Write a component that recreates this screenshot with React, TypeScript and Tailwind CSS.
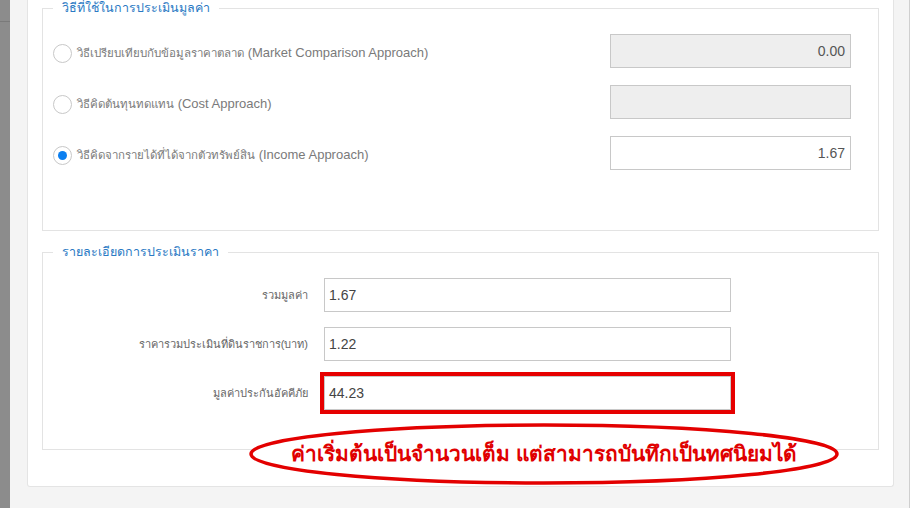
import React from "react";

const font = { fontFamily: '"Liberation Sans", Arial, sans-serif' };

function Radio({ checked }: { checked?: boolean }) {
  return (
    <span className="flex h-[19px] w-[19px] shrink-0 items-center justify-center rounded-full border border-[#c8c8c8] bg-white">
      {checked && <span className="h-[9px] w-[9px] rounded-full bg-[#0b7ff0]" />}
    </span>
  );
}

function MethodRow({
  thai,
  eng,
  value,
  checked,
  disabled,
}: {
  thai: string;
  eng: string;
  value: string;
  checked?: boolean;
  disabled?: boolean;
}) {
  return (
    <div className="flex h-[34px] items-center">
      <div className="flex flex-1 items-center gap-[5px] pl-[10px] pt-[4px]">
        <Radio checked={checked} />
        <span className="text-[13px] text-[#7a7a7a]">
          <span className="text-[11.5px]">{thai}</span> {eng}
        </span>
      </div>
      <div
        className={`mr-[27px] flex h-[34px] w-[241px] items-center justify-end border border-[#c8c8c8] pr-[5px] text-[14px] text-[#555] ${
          disabled ? "bg-[#eeeeee]" : "bg-white"
        }`}
      >
        {value}
      </div>
    </div>
  );
}

function DetailRow({ label, value, highlight }: { label: string; value: string; highlight?: boolean }) {
  return (
    <div className="flex h-[34px] items-center">
      <div className="w-[281px] pr-[16px] text-right text-[11px] text-[#666]">{label}</div>
      <div
        className={`flex h-[34px] w-[407px] items-center border border-[#c8c8c8] bg-white pl-[4px] text-[14px] text-[#444] ${
          highlight ? "outline-[4px] outline-solid outline-[#e60000]" : ""
        }`}
      >
        {value}
      </div>
    </div>
  );
}

export default function App() {
  return (
    <div className="flex h-[508px] w-[910px] overflow-hidden bg-[#f4f4f4]" style={font}>
      <div className="relative w-[10px] bg-[#8c8c8c]">
        <div className="absolute left-0 top-[21px] h-[1px] w-[10px] bg-[#7a7a7a]" />
      </div>
      <div className="pl-[17px] pr-[15px]">
        <div className="relative h-[487px] w-[867px] rounded-b-[3px] border-x border-b border-[#e4e4e4] bg-white px-[14px]">
          <fieldset className="h-[231px] border border-[#e3e3e3]">
            <legend className="ml-[10px] px-[9px] text-[12.5px] leading-[16px] text-[#2a7ac4]">
              วิธีที่ใช้ในการประเมินมูลค่า
            </legend>
            <div className="flex flex-col gap-[17px] pt-[18px]">
              <MethodRow
                thai="วิธีเปรียบเทียบกับข้อมูลราคาตลาด"
                eng="(Market Comparison Approach)"
                value="0.00"
                disabled
              />
              <MethodRow thai="วิธีคิดต้นทุนทดแทน" eng="(Cost Approach)" value="" disabled />
              <MethodRow
                thai="วิธีคิดจากรายได้ที่ได้จากตัวทรัพย์สิน"
                eng="(Income Approach)"
                value="1.67"
                checked
              />
            </div>
          </fieldset>
          <fieldset className="mt-[13px] h-[206px] border border-[#e3e3e3]">
            <legend className="ml-[10px] px-[9px] text-[12.5px] font-medium leading-[16px] text-[#2a7ac4]">
              รายละเอียดการประเมินราคา
            </legend>
            <div className="flex flex-col gap-[15px] pt-[18px]">
              <DetailRow label="รวมมูลค่า" value="1.67" />
              <DetailRow label="ราคารวมประเมินที่ดินราชการ(บาท)" value="1.22" />
              <DetailRow label="มูลค่าประกันอัคคีภัย" value="44.23" highlight />
            </div>
          </fieldset>
          <div className="absolute left-[220px] top-[423px] flex h-[62px] w-[592px] items-center justify-center">
            <svg className="absolute inset-0" width="592" height="62" viewBox="0 0 592 62">
              <ellipse cx="296" cy="31" rx="293" ry="29" fill="white" stroke="#e30000" strokeWidth="3.5" />
            </svg>
            <span className="relative text-[20.8px] font-bold text-[#e00000]">
              ค่าเริ่มต้นเป็นจำนวนเต็ม แต่สามารถบันทึกเป็นทศนิยมได้
            </span>
          </div>
        </div>
      </div>
      <div className="ml-auto w-[1px] bg-[#cfcfcf]" />
    </div>
  );
}
